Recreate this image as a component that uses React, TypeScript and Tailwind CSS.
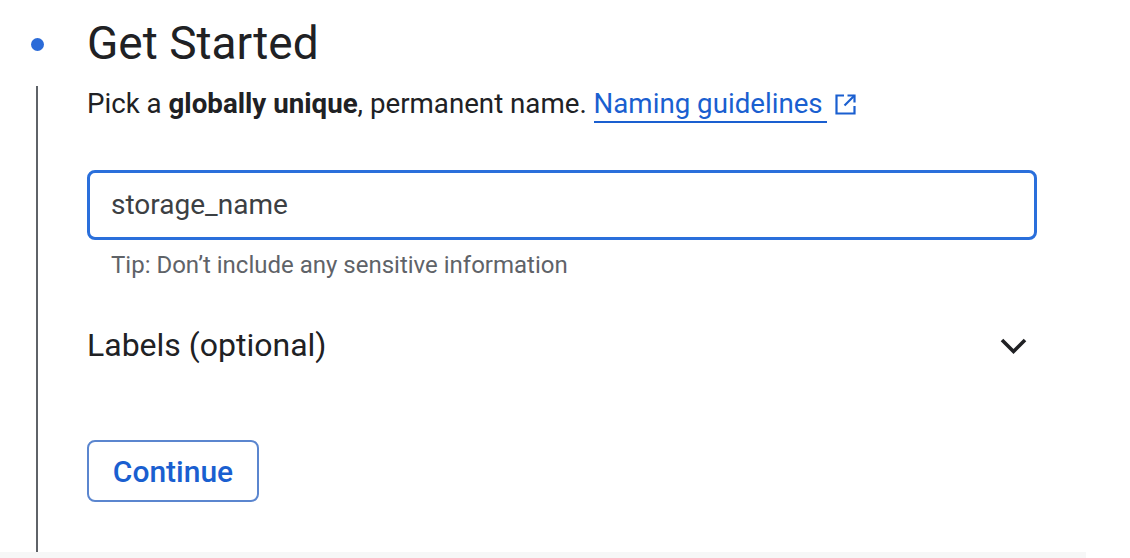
import React from "react";

export default function App() {
  return (
    <div className="w-[1130px] h-[558px] bg-white overflow-hidden flex flex-col" style={{ fontFamily: "Roboto, 'Noto Sans', sans-serif" }}>
      <div className="flex-1 flex flex-col">
        <div className="flex items-center h-[86px] pt-[2px]">
          <div className="w-[74px] flex justify-center">
            <div className="w-[13px] h-[13px] rounded-full bg-[#2b6bd8]"></div>
          </div>
          <h1 className="text-[46px] leading-none text-[#202124] ml-[13px] mt-[-2px]">Get Started</h1>
        </div>
        <div className="flex flex-1">
          <div className="w-[74px] flex justify-center">
            <div className="w-[2px] h-full bg-[#5f6368]"></div>
          </div>
          <div className="ml-[13px] w-[950px] flex flex-col">
            <p className="text-[27.7px] leading-[36px] text-[#202124] whitespace-nowrap">
              Pick a <span className="font-bold">globally unique</span>, permanent name.{" "}
              <a className="text-[#1a5fd0] border-b-2 border-[#1a5fd0] pb-[1px] pr-[4px]">Naming guidelines</a>
              <svg className="inline-block ml-[8px] align-[-2px]" width="21" height="21" viewBox="0 0 21 21" fill="none" stroke="#1a5fd0" strokeWidth="2.2">
                <path d="M9 1.5H1.5v18h18V12" />
                <path d="M12.5 1.5h7v7" />
                <path d="M19.5 1.5L9.5 11.5" />
              </svg>
            </p>
            <div className="mt-[48px] h-[70px] border-[3px] border-[#2a6fdb] rounded-[8px] flex items-center pl-[21px]">
              <span className="text-[28px] text-[#3c4043]">storage_name</span>
            </div>
            <div className="pl-[24px] mt-[11px] text-[24px] leading-[28px] text-[#5f6368]">Tip: Don’t include any sensitive information</div>
            <div className="mt-[46px] h-[40px] flex items-center justify-between">
              <span className="text-[32px] leading-[40px] text-[#202124]">Labels (optional)</span>
              <svg className="mr-[9px] mt-[2px]" width="30" height="20" viewBox="0 0 30 20" fill="none" stroke="#202124" strokeWidth="3.6">
                <path d="M4 4L15.5 15.5L27 4" />
              </svg>
            </div>
            <div className="mt-[75px]">
              <button className="w-[172px] h-[62px] border-2 border-[#5b86cf] rounded-[8px] text-[30px] text-[#1a5fd0] font-medium">Continue</button>
            </div>
          </div>
        </div>
      </div>
      <div className="h-[6px] w-[1086px] bg-[#f6f7f7]"></div>
    </div>
  );
}
